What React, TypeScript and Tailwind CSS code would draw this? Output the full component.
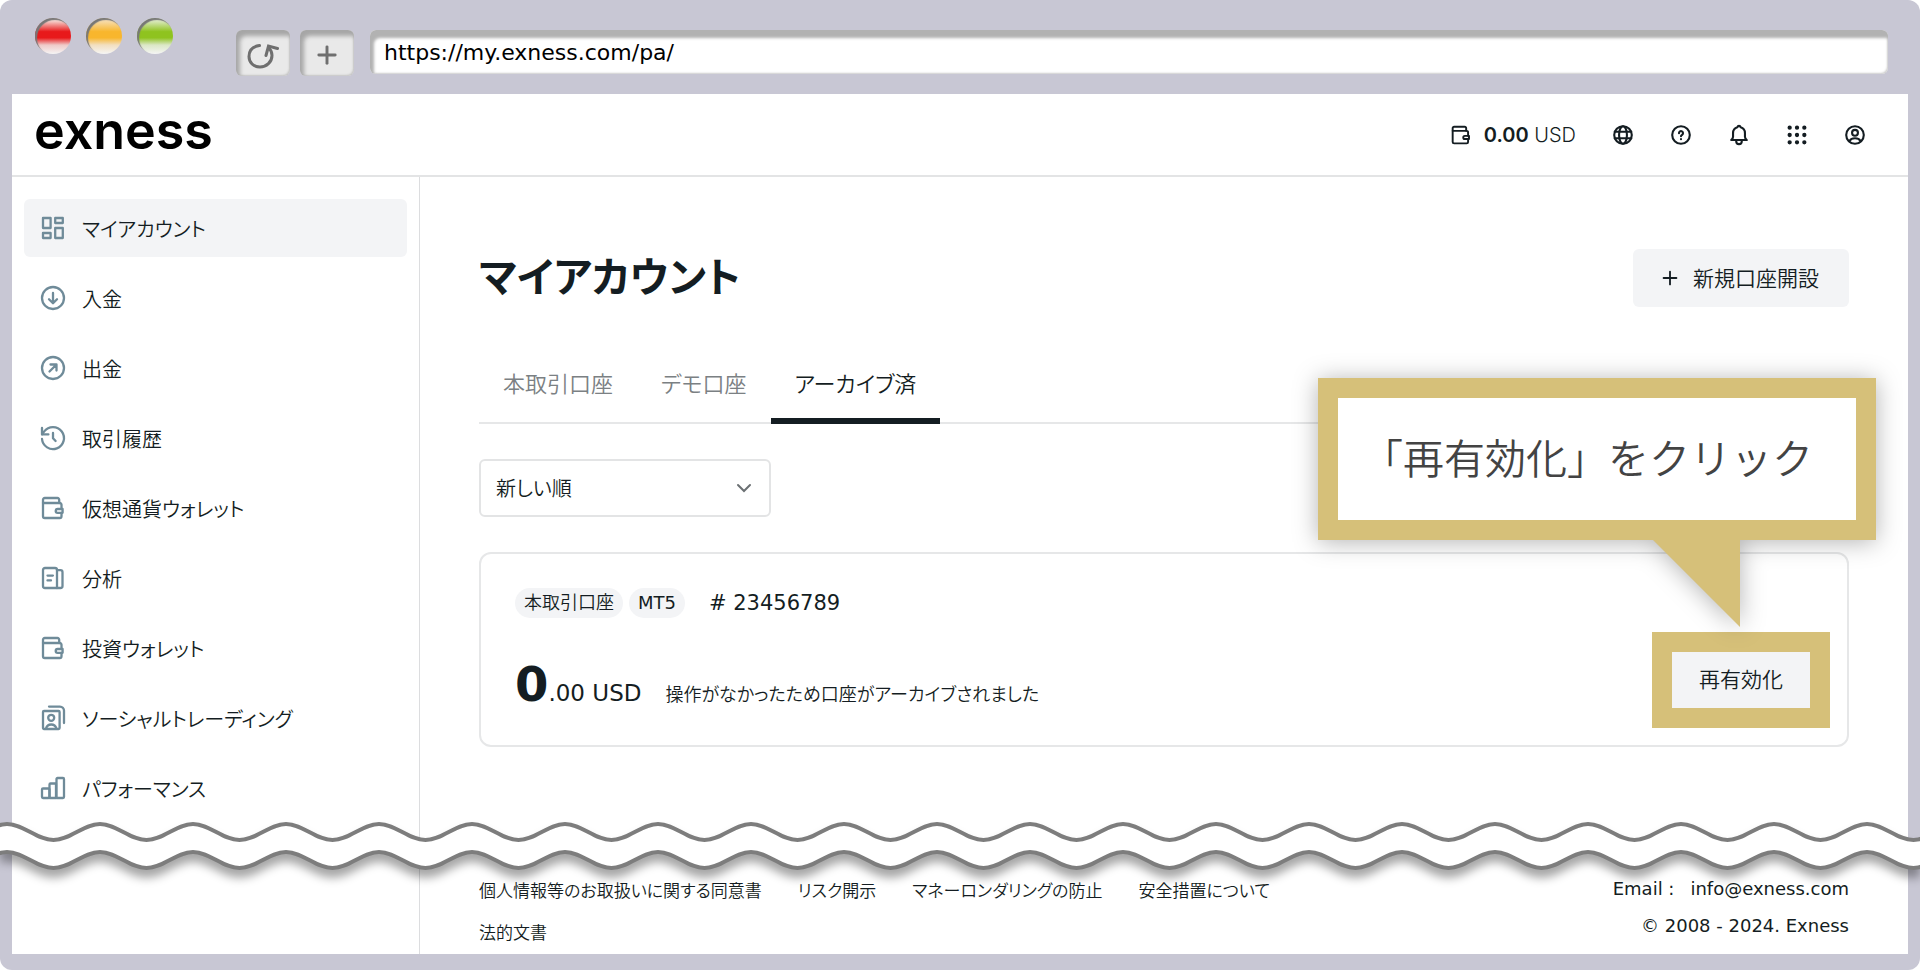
import React, { useState } from 'react';
import { Plus } from 'lucide-react';

// --- Icons ---

const Icon = ({ children, className = '' }: { children: React.ReactNode; className?: string }) => (
  <svg
    viewBox="0 0 24 24"
    fill="none"
    stroke="currentColor"
    strokeWidth="2.3"
    strokeLinecap="round"
    strokeLinejoin="round"
    aria-hidden="true"
    className={`shrink-0 overflow-visible ${className}`}
  >
    {children}
  </svg>
);

const DashboardIcon = ({ className }: { className?: string }) => (
  <Icon className={className}>
    <rect x="2" y="2" width="7.6" height="10" />
    <rect x="14.2" y="2" width="7.6" height="5" />
    <rect x="2" y="17" width="7.6" height="5" />
    <rect x="14.2" y="12" width="7.6" height="10" />
  </Icon>
);

const DepositIcon = ({ className }: { className?: string }) => (
  <Icon className={className}>
    <circle cx="12" cy="12" r="11" />
    <path d="M12 7v10M8 13.2l4 4 4-4" />
  </Icon>
);

const WithdrawIcon = ({ className }: { className?: string }) => (
  <Icon className={className}>
    <circle cx="12" cy="12" r="11" />
    <path d="M8.5 15.5l7-7M9.5 8.5h6v6" />
  </Icon>
);

const HistoryIcon = ({ className }: { className?: string }) => (
  <Icon className={className}>
    <path d="M1 13a11 11 0 1 0 2.2-7.6L1.2 8.2" />
    <path d="M1 2v6.4h6.4M12 7v5.2l2.6 2.8" />
  </Icon>
);

const WalletIcon = ({ className }: { className?: string }) => (
  <Icon className={className}>
    <path d="M18.2 7V3.7A1.7 1.7 0 0 0 16.5 2H3.7A1.7 1.7 0 0 0 2 3.7V20.3A1.7 1.7 0 0 0 3.7 22H18.8a1.7 1.7 0 0 0 1.7-1.7V17" />
    <path d="M2 7h16.8a1.7 1.7 0 0 1 1.7 1.7V13" />
    <path d="M21.6 13h-5a1.9 1.9 0 0 0 0 3.8h5z" />
  </Icon>
);

const AnalyticsIcon = ({ className }: { className?: string }) => (
  <Icon className={className}>
    <path d="M4 2h10a2 2 0 0 1 2 2v18H4a2 2 0 0 1-2-2V4a2 2 0 0 1 2-2z" />
    <path d="M16 4.2h3.5a2 2 0 0 1 2 2V20a2 2 0 0 1-2 2H16" />
    <path d="M6.5 9.6h5.4M6.5 14.4h3.5" />
  </Icon>
);

const SocialIcon = ({ className }: { className?: string }) => (
  <Icon className={className}>
    <rect x="2" y="5" width="16.6" height="18" rx="1" />
    <circle cx="10.2" cy="11.8" r="3" />
    <path d="M5 22.5c.8-2.8 2.8-4 5.2-4s4.4 1.2 5.2 4M8 .6h11a4 4 0 0 1 4 4V17" />
  </Icon>
);

const PerformanceIcon = ({ className }: { className?: string }) => (
  <Icon className={className}>
    <rect x="1" y="12.5" width="7.5" height="9.5" rx="1" />
    <path d="M8.5 22V8.5a1 1 0 0 1 1-1h5.5V22z" />
    <path d="M15.5 22V3a1 1 0 0 1 1-1H22a1 1 0 0 1 1 1v18a1 1 0 0 1-1 1z" />
  </Icon>
);

const GlobeIcon = ({ className }: { className?: string }) => (
  <Icon className={className}>
    <circle cx="12" cy="12" r="9.6" />
    <ellipse cx="12" cy="12" rx="4.3" ry="9.6" />
    <path d="M3 8.5h18M3 15.5h18" />
  </Icon>
);

const HelpIcon = ({ className }: { className?: string }) => (
  <Icon className={className}>
    <circle cx="12" cy="12" r="9.6" />
    <path d="M9.8 10a2.2 2.2 0 1 1 3.4 1.8c-.8.5-1.2.8-1.2 1.5M12 16.5v.1" />
  </Icon>
);

const BellIcon = ({ className }: { className?: string }) => (
  <Icon className={className}>
    <path d="M3.5 17.5c1.3-1 2-1.8 2-3.5V10c0-3.5 2-5.8 4.7-6.5.3-1 1-1.5 1.8-1.5s1.5.5 1.8 1.5c2.7.7 4.7 3 4.7 6.5v4c0 1.7.7 2.5 2 3.5z" />
    <path d="M9 18v1.2a3 2.8 0 0 0 6 0V18" />
  </Icon>
);

const AppsIcon = ({ className }: { className?: string }) => (
  <Icon className={className}>
    {[4, 12, 20].map((y) =>
      [4, 12, 20].map((x) => <circle key={`${x}-${y}`} cx={x} cy={y} r="1.2" fill="currentColor" />),
    )}
  </Icon>
);

const ProfileIcon = ({ className }: { className?: string }) => (
  <Icon className={className}>
    <circle cx="12" cy="12" r="9.6" />
    <circle cx="12" cy="9.6" r="3.2" />
    <path d="M6 18.6c1.2-2.2 3.4-3 6-3s4.8.8 6 3" />
  </Icon>
);

// --- Data ---

const menuItems = [
  { id: 'accounts', label: 'マイアカウント', icon: DashboardIcon },
  { id: 'deposit', label: '入金', icon: DepositIcon },
  { id: 'withdraw', label: '出金', icon: WithdrawIcon },
  { id: 'history', label: '取引履歴', icon: HistoryIcon },
  { id: 'crypto', label: '仮想通貨ウォレット', icon: WalletIcon },
  { id: 'analytics', label: '分析', icon: AnalyticsIcon },
  { id: 'invest', label: '投資ウォレット', icon: WalletIcon },
  { id: 'social', label: 'ソーシャルトレーディング', icon: SocialIcon },
  { id: 'performance', label: 'パフォーマンス', icon: PerformanceIcon },
];

const headerActions = [
  { label: '言語', icon: GlobeIcon },
  { label: 'ヘルプ', icon: HelpIcon },
  { label: '通知', icon: BellIcon },
  { label: 'アプリ', icon: AppsIcon },
  { label: 'プロフィール', icon: ProfileIcon },
];

const tabs = ['本取引口座', 'デモ口座', 'アーカイブ済'];

const footerLinks = [
  '個人情報等のお取扱いに関する同意書',
  'リスク開示',
  'マネーロンダリングの防止',
  '安全措置について',
  '法的文書',
];

// --- Components ---

const lightBase = 'size-9 rounded-full shadow-[inset_2px_2px_1px_#777]';
const toolButton =
  'flex h-[46px] w-[54px] items-center justify-center rounded-md bg-[#e9e9e9] pt-[3px] text-[#6f6f6f] shadow-[inset_4px_6px_4px_#a6a6a6,inset_-1px_-1px_2px_#c4c4c4]';

const BrowserBar = () => (
  <div className="flex h-[94px] items-start pt-[18px] pr-8 pl-[35px]">
    <div className="flex gap-[15px]">
      <span className={`${lightBase} bg-[linear-gradient(#f6d5cf_8%,#e8191b_38%,#e8191b_55%,#efcac8_75%,#f5f5f5)]`} />
      <span className={`${lightBase} bg-[linear-gradient(#f7dcae_8%,#f8b62d_38%,#f8b62d_55%,#f2dfc0_75%,#f5f5f5)]`} />
      <span className={`${lightBase} bg-[linear-gradient(#dbe9c0_8%,#8fc31f_38%,#8fc31f_55%,#dbe7c6_75%,#f5f5f5)]`} />
    </div>
    <div className="mt-3 ml-[63px] flex gap-[10px]">
      <button type="button" aria-label="再読み込み" className={toolButton}>
        <svg viewBox="0 0 32 28" fill="none" stroke="currentColor" strokeWidth="3" strokeLinecap="round" aria-hidden="true" className="h-7 w-8">
          <path d="M12.5 4.5C5 5.5 2 10 2 15.5c0 6 4.5 10.5 11 10.5s12-5 12-11.5c0-2.8-1-5.3-3-7.5" />
          <path d="M19 14.5l2.5-9.5 9 2.5" />
        </svg>
      </button>
      <button type="button" aria-label="新しいタブ" className={toolButton}>
        <Plus size={28} strokeWidth={2.5} />
      </button>
    </div>
    <input
      type="url"
      aria-label="アドレス"
      defaultValue="https://my.exness.com/pa/"
      className="mt-3 ml-4 h-11 min-w-0 flex-1 rounded-md bg-white pl-[14px] text-[22px] font-normal text-black shadow-[inset_4px_8px_3px_#b2b2b2,inset_-1px_-1px_2px_#ccc] outline-none"
    />
  </div>
);

const Header = () => (
  <header className="flex h-[83px] items-center justify-between border-b-2 border-[#e3e4e5] pr-[42px] pl-[22px]">
    <a href="#home" className="pb-2 font-['Inter',sans-serif] text-[52px] leading-none font-semibold text-black">
      exness
    </a>
    <div className="flex items-center gap-9">
      <div className="flex items-center gap-3 font-['Inter',sans-serif] text-xl">
        <WalletIcon className="size-[22px] p-px" />
        <span>
          <b className="font-semibold">0.00</b> <span className="font-light">USD</span>
        </span>
      </div>
      {headerActions.map((action) => (
        <button key={action.label} type="button" aria-label={action.label}>
          <action.icon className="size-[22px]" />
        </button>
      ))}
    </div>
  </header>
);

const Sidebar = () => {
  const [active, setActive] = useState('accounts');

  return (
    <nav aria-label="メニュー" className="flex w-[408px] shrink-0 flex-col gap-3 border-r border-[#dcdddf] px-3 pt-[22px]">
      {menuItems.map((item) => (
        <a
          key={item.id}
          href={`#${item.id}`}
          onClick={() => setActive(item.id)}
          className={`flex h-[58px] items-center gap-[17px] rounded-md pl-[17px] text-xl ${
            active === item.id ? 'bg-[#f3f4f6]' : ''
          }`}
        >
          <item.icon className="size-6 text-[#6f8b99]" />
          <span className="pt-[3px]">{item.label}</span>
        </a>
      ))}
    </nav>
  );
};

// Speech bubble that points at the reactivate button
const Callout = () => (
  <div className="absolute -right-[27px] bottom-full mb-3 drop-shadow-[0_2px_12px_rgba(0,0,0,0.3)]">
    <p className="w-[558px] border-[20px] border-[#d6c079] bg-white pt-[2px] pl-6 text-[41px] leading-[120px] whitespace-nowrap text-[#434343] [font-feature-settings:normal]">
      「再有効化」をクリック
    </p>
    <svg viewBox="0 0 87 87" aria-hidden="true" className="absolute top-full right-[136px] size-[87px] fill-[#d6c079]">
      <path d="M0 0H87V87Z" />
    </svg>
  </div>
);

const AccountCard = () => (
  <section className="relative mt-[35px]">
    <div className="flex items-end justify-between rounded-xl border-2 border-[#e6e7e8] pt-[34px] pr-[37px] pb-[37px] pl-[34px]">
      <div>
        <div className="flex items-center">
          <span className="rounded-full bg-[#f3f4f6] px-[9px] text-lg leading-[30px]">本取引口座</span>
          <span className="ml-[6px] rounded-full bg-[#f3f4f6] px-[9px] text-lg leading-[30px] font-normal">MT5</span>
          <span className="ml-6 text-[21px] leading-[30px] font-normal"># 23456789</span>
        </div>
        <div className="mt-[42px] flex items-baseline">
          <b className="text-[48px] leading-[48px]">0</b>
          <span className="text-[23px] leading-6 font-normal">.00 USD</span>
          <span className="ml-6 text-lg leading-6">操作がなかったため口座がアーカイブされました</span>
        </div>
      </div>
      <button type="button" className="h-14 bg-[#f3f4f6] px-[27px] pt-[2px] text-[21px] outline-[20px] outline-[#d6c079]">
        再有効化
      </button>
    </div>
    <Callout />
  </section>
);

const Footer = () => (
  <footer className="mt-auto flex items-end justify-between pt-10">
    <nav aria-label="フッター" className="flex max-w-[840px] flex-wrap gap-x-9 text-[17px] leading-[42px]">
      {footerLinks.map((label) => (
        <a key={label} href="#legal">
          {label}
        </a>
      ))}
    </nav>
    <address className="pb-[10px] text-right text-lg leading-[37px] font-normal not-italic">
      <p className="flex justify-end gap-4">
        <span>Email :</span>
        <a href="mailto:info@exness.com">info@exness.com</a>
      </p>
      <p>© 2008 - 2024. Exness</p>
    </address>
  </footer>
);

const Main = () => {
  const [tab, setTab] = useState('アーカイブ済');

  return (
    <main className="flex min-w-0 flex-1 flex-col px-[59px] pt-[72px]">
      <div className="flex items-center justify-between">
        <h1 className="text-[41px] leading-[58px] font-bold">マイアカウント</h1>
        <button type="button" className="flex h-[58px] items-center gap-3 rounded-md bg-[#f3f4f6] pr-[30px] pl-[26px] text-[21px]">
          <Plus size={22} strokeWidth={2} />
          <span className="pt-[3px]">新規口座開設</span>
        </button>
      </div>

      <div role="tablist" className="mt-[37px] flex border-b-2 border-[#e6e7e8]">
        {tabs.map((label) => (
          <button
            key={label}
            type="button"
            role="tab"
            aria-selected={tab === label}
            onClick={() => setTab(label)}
            className={`-mb-[2px] h-20 border-b-[6px] px-6 pt-[6px] text-[22px] ${
              tab === label ? 'border-[#141d22]' : 'border-transparent text-[#7b8083]'
            }`}
          >
            {label}
          </button>
        ))}
      </div>

      <div className="relative mt-[35px] w-[292px]">
        <select aria-label="並び順" className="h-[58px] w-full appearance-none rounded-md border-2 border-[#e3e4e5] bg-white pt-[2px] pl-[15px] text-xl">
          <option>新しい順</option>
          <option>古い順</option>
        </select>
        <svg
          viewBox="0 0 14 8"
          fill="none"
          stroke="#6b7073"
          strokeWidth="2"
          strokeLinecap="round"
          aria-hidden="true"
          className="pointer-events-none absolute top-[25px] right-5 h-2 w-[14px] overflow-visible"
        >
          <path d="M1 1l6 6 6-6" />
        </svg>
      </div>

      <AccountCard />
      <Footer />
    </main>
  );
};

// Wavy tear that marks the skipped part of the page
const PageBreak = () => (
  <svg aria-hidden="true" className="pointer-events-none absolute inset-x-0 bottom-[92px] h-[60px] w-full drop-shadow-[0_8px_5px_rgba(0,0,0,0.35)]">
    <defs>
      <pattern id="tear" x="7" width="93" height="60" patternUnits="userSpaceOnUse">
        <path
          fill="#fff"
          d="M0 6C17 6 29.5 22 46.5 22S76 6 93 6V34C76 34 63.5 50 46.5 50S17 34 0 34Z"
        />
        <g fill="none" stroke="#7d7d7d" strokeWidth="4">
          <path d="M-46.5 22C-29.5 22-17 6 0 6S29.5 22 46.5 22 76 6 93 6s29.5 16 46.5 16" />
          <path d="M-46.5 50C-29.5 50-17 34 0 34S29.5 50 46.5 50 76 34 93 34s29.5 16 46.5 16" />
        </g>
      </pattern>
    </defs>
    <rect width="100%" height="60" fill="url(#tear)" />
  </svg>
);

export default function App() {
  return (
    <div
      lang="ja"
      className="bg-white font-['DejaVu_Sans','Noto_Sans_CJK_JP',sans-serif] font-[350] text-[#141d22] [font-feature-settings:'palt']"
    >
      <div className="relative flex min-h-screen flex-col overflow-hidden rounded-xl bg-[#c8c7d4]">
        <BrowserBar />
        <div className="mx-3 mb-4 flex flex-1 flex-col bg-white">
          <Header />
          <div className="flex flex-1">
            <Sidebar />
            <Main />
          </div>
        </div>
        <PageBreak />
      </div>
    </div>
  );
}
